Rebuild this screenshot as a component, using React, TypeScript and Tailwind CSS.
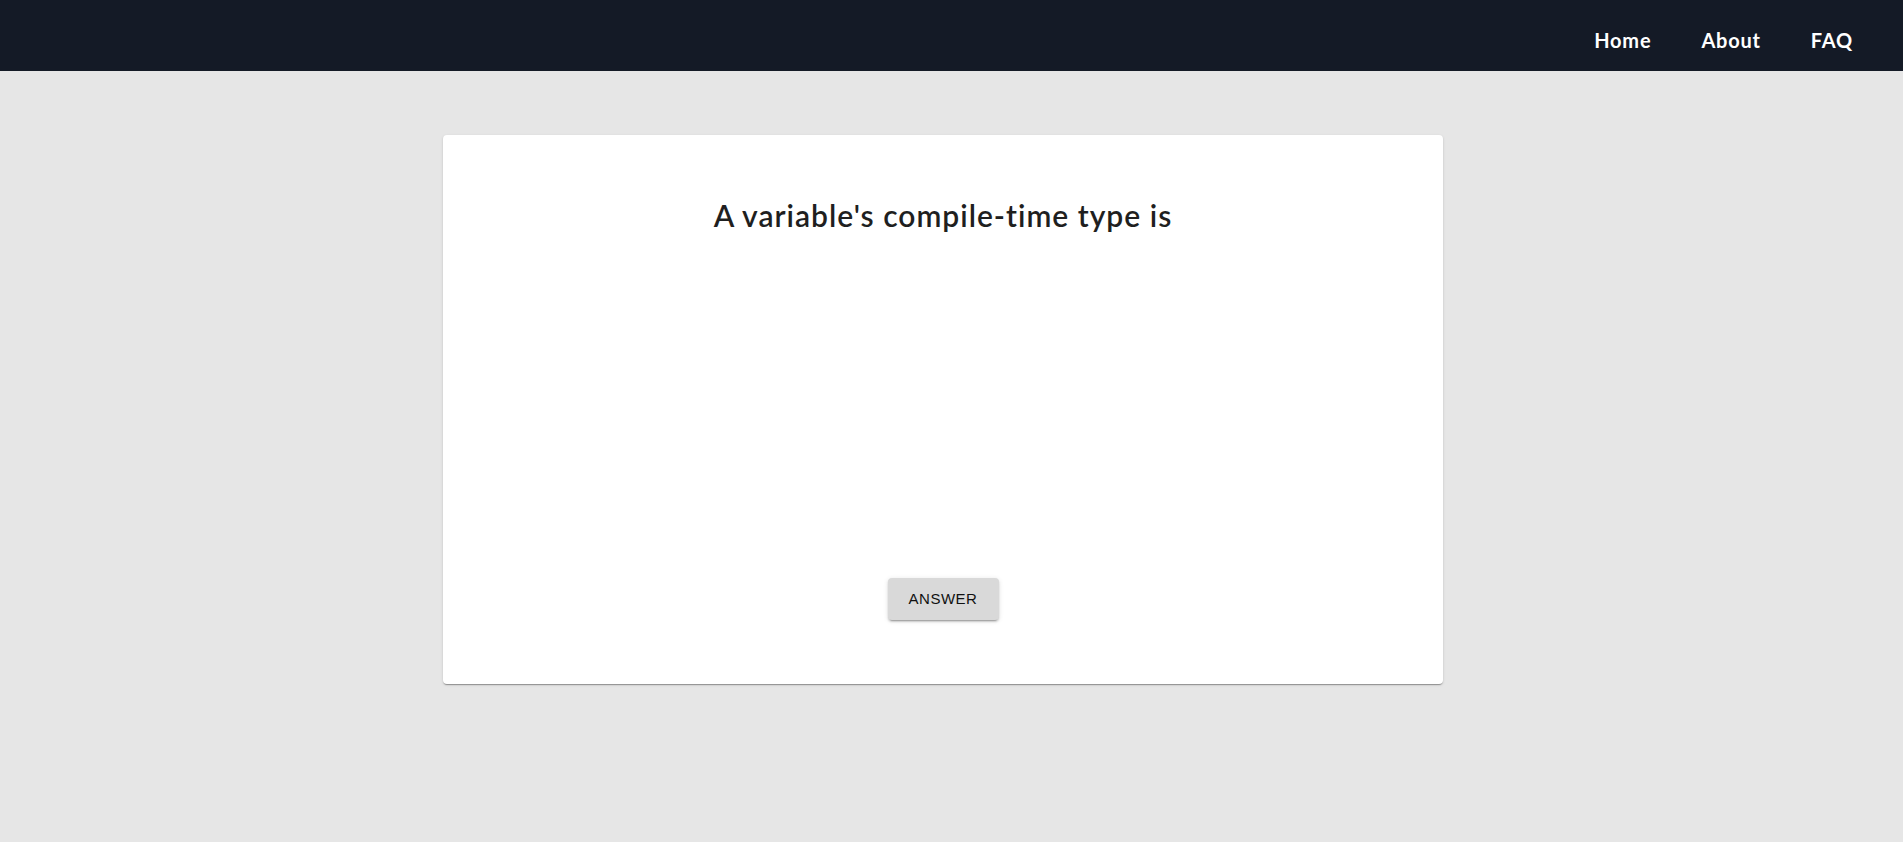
import React from "react";

export default function App() {
  return (
    <div className="min-h-[842px] w-full bg-[#e6e6e6]" style={{ fontFamily: "Lato, 'Noto Sans', sans-serif" }}>
      <nav className="h-[71px] bg-[#141a26] flex items-center justify-end pr-[50px] pt-[9px]">
        <ul className="flex items-center gap-[50px] text-white text-[20px] font-bold tracking-[0.8px]">
          <li><a href="#">Home</a></li>
          <li><a href="#">About</a></li>
          <li><a href="#">FAQ</a></li>
        </ul>
      </nav>
      <main className="flex justify-center pt-[64px] pr-[17px]">
        <div className="w-[1000px] h-[549px] bg-white rounded-[4px] shadow-[0_2px_1px_-1px_rgba(0,0,0,0.2),0_1px_1px_0_rgba(0,0,0,0.14),0_1px_3px_0_rgba(0,0,0,0.12)] flex flex-col items-center">
          <h1 className="mt-[62px] text-[30px] leading-[36px] font-semibold text-[#1f1f1f] tracking-[1px]">A variable's compile-time type is</h1>
          <div className="flex-1" />
          <button
            className="mb-[64px] w-[111px] h-[42px] bg-[#d9d9d9] rounded-[4px] text-[15px] text-[#111] tracking-[0.5px] shadow-[0_3px_1px_-2px_rgba(0,0,0,0.2),0_2px_2px_0_rgba(0,0,0,0.14),0_1px_5px_0_rgba(0,0,0,0.12)]"
            style={{ fontFamily: "'Liberation Sans', Arial, sans-serif" }}
          >
            ANSWER
          </button>
        </div>
      </main>
    </div>
  );
}
